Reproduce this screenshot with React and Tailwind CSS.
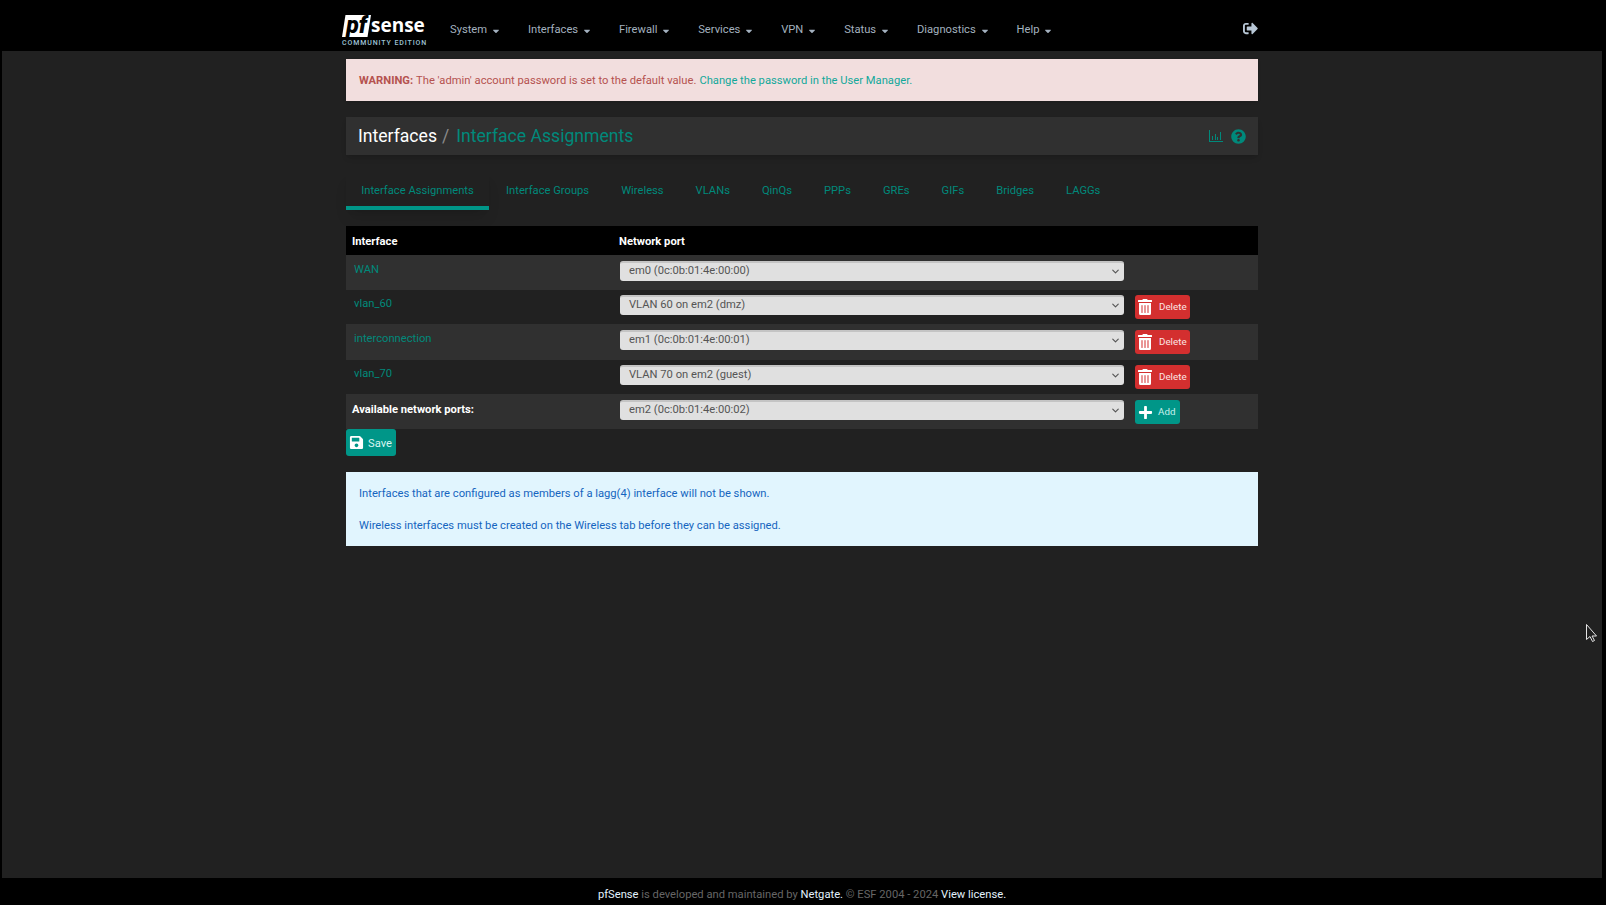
import {FaCaretDown, FaPlus, FaQuestionCircle, FaSave, FaSignOutAlt, FaTrashAlt} from 'react-icons/fa';
import {ChevronDown} from 'lucide-react';

const menus = ['System', 'Interfaces', 'Firewall', 'Services', 'VPN', 'Status', 'Diagnostics', 'Help'];
const tabs = ['Interface Groups', 'Wireless', 'VLANs', 'QinQs', 'PPPs', 'GREs', 'GIFs', 'Bridges', 'LAGGs'];

const rows = [
 {name: 'WAN', port: 'em0 (0c:0b:01:4e:00:00)', h: 'h-[35px] pt-[6px]', bg: 'bg-[#303030]', del: false},
 {name: 'vlan_60', port: 'VLAN 60 on em2 (dmz)', h: 'h-[34px] pt-[5px]', bg: 'bg-[#212121]', del: true},
 {name: 'interconnection', port: 'em1 (0c:0b:01:4e:00:01)', h: 'h-[36px] pt-[6px]', bg: 'bg-[#303030]', del: true},
 {name: 'vlan_70', port: 'VLAN 70 on em2 (guest)', h: 'h-[34px] pt-[5px]', bg: 'bg-[#212121]', del: true},
];

function Logo() {
 return (
  <div className="w-[86px] shrink-0 select-none">
   <div className="flex items-end h-[22px]">
    <span className="bg-white text-black italic font-black text-[23px] leading-[22px] h-[22px] w-[29px] text-center font-['Roboto',sans-serif] [clip-path:polygon(12%_0,100%_0,88%_100%,0_100%)]">
     pf
    </span>
    <span className="text-white font-bold text-[19px] leading-[22px] font-['Open_Sans',sans-serif] mb-[1px]">
     sense
    </span>
   </div>
   <div className="text-[#9fc3d6] text-[7px] leading-[7px] mt-[3px] tracking-[0.9px] font-medium whitespace-nowrap">
    COMMUNITY EDITION
   </div>
  </div>
 );
}

function BarChartIcon() {
 return (
  <svg width="14" height="12" viewBox="0 0 14 12" className="text-[#00897b]" fill="currentColor">
   <rect x="0" y="0" width="1" height="12" />
   <rect x="0" y="11" width="14" height="1" />
   <rect x="3" y="6" width="1" height="4" />
   <rect x="6" y="4" width="1" height="6" />
   <rect x="8" y="7" width="1" height="3" />
   <rect x="11" y="2" width="1" height="8" />
  </svg>
 );
}

function FakeSelect({value}) {
 return (
  <div className="w-[504px] h-[20px] rounded-[3px] bg-[#e0e0e0] border-t-2 border-[#c4c4c4] pl-[9px] pr-[3px] pb-[2px] flex items-center justify-between text-[11.2px] text-[#555]">
   <span>{value}</span>
   <ChevronDown size={11} strokeWidth={2.5} className="text-[#555]" />
  </div>
 );
}

function DeleteButton() {
 return (
  <button className="w-[55px] h-[24px] rounded-[3px] bg-[#d32f2f] text-white flex items-center pl-[2px] text-[9.8px]">
   <FaTrashAlt size={16} />
   <span className="ml-[6px] text-[#fbe4e4]">Delete</span>
  </button>
 );
}

export default function App() {
 return (
  <div className="h-[905px] bg-black flex flex-col font-['Roboto',sans-serif] text-[11.2px] relative overflow-hidden">
   {/* navbar */}
   <div className="h-[51px] shrink-0 flex justify-center pr-[2px]">
    <div className="w-[912px] flex items-start relative">
     <div className="ml-[-4px] mt-[15px]">
      <Logo />
     </div>
     <div className="flex items-center gap-[27px] ml-[22px] mt-[22px] text-[#a3b1bf]">
      {menus.map((m) => (
       <span key={m} className="flex items-center">
        {m}
        <FaCaretDown size={10} className="ml-[3.8px] mt-[1px]" />
       </span>
      ))}
     </div>
     <FaSignOutAlt size={15} className="ml-auto mt-[21px] text-[#b8c7d6]" />
    </div>
   </div>

   {/* page */}
   <div className="flex-1 ml-[2px] mr-[4px] bg-[#212121] flex justify-center">
    <div className="w-[912px]">
     <div className="mt-[8px] h-[42px] bg-[#f2dede] text-[#b5524f] flex items-center pl-[13px] pt-[2px] shadow-sm">
      <b className="font-bold">WARNING:</b>
      <span className="ml-[3px]">The 'admin' account password is set to the default value.</span>
      <a className="ml-[3px] text-[#13a89a]">Change the password in the User Manager.</a>
     </div>

     <div className="mt-[16px] h-[38px] bg-[#303030] flex items-center pl-[12px] pr-[12px] shadow-md">
      <span className="text-white text-[17.6px]">Interfaces</span>
      <span className="text-[#8a8a8a] text-[17.6px] ml-[5px]">/</span>
      <span className="text-[#00897b] text-[17.6px] ml-[7px]">Interface Assignments</span>
      <div className="ml-auto flex items-center gap-[8px]">
       <BarChartIcon />
       <FaQuestionCircle size={15} className="text-[#00897b]" />
      </div>
     </div>

     {/* tabs */}
     <div className="mt-[18px] flex items-start text-[#00897b]">
      <div className="w-[143px] h-[37px] pt-[4px] border-b-[4px] border-[#009688] flex items-center justify-center shadow-lg">
       Interface Assignments
      </div>
      <div className="flex gap-[32px] ml-[17px] h-[33px] pt-[4px] items-center">
       {tabs.map((t) => (
        <span key={t}>{t}</span>
       ))}
      </div>
     </div>

     {/* table */}
     <div className="mt-[16px] h-[29px] bg-black text-white font-bold flex items-center pt-[3px]">
      <span className="w-[266px] pl-[6px]">Interface</span>
      <span className="pl-[7px]">Network port</span>
     </div>
     {rows.map((r) => (
      <div key={r.name} className={`flex items-start ${r.h} ${r.bg}`}>
       <a className="w-[266px] pl-[8px] text-[#00897b] leading-[16px] mt-[1px]">{r.name}</a>
       <div className="pl-[8px]">
        <FakeSelect value={r.port} />
       </div>
       {r.del && (
        <div className="ml-[11px]">
         <DeleteButton />
        </div>
       )}
      </div>
     ))}
     <div className="flex items-start h-[35px] pt-[6px] bg-[#303030]">
      <span className="w-[266px] pl-[6px] text-white font-bold leading-[16px] mt-[2px]">
       Available network ports:
      </span>
      <div className="pl-[8px]">
       <FakeSelect value="em2 (0c:0b:01:4e:00:02)" />
      </div>
      <button className="ml-[11px] w-[45px] h-[24px] rounded-[3px] bg-[#009688] flex items-center pl-[3px] text-[9.8px] text-[#c8f0ec]">
       <FaPlus size={15} className="text-white" />
       <span className="ml-[5px]">Add</span>
      </button>
     </div>

     <button className="w-[50px] h-[27px] rounded-[3px] bg-[#009688] flex items-center pl-[3px] text-[11.2px] text-[#d7f5f1]">
      <FaSave size={15} className="text-white" />
      <span className="ml-[4px] mt-[3px]">Save</span>
     </button>

     <div className="mt-[16px] h-[74px] bg-[#e1f5fe] text-[#1565c0] pl-[13px] pt-[14px] leading-[15px]">
      <p>Interfaces that are configured as members of a lagg(4) interface will not be shown.</p>
      <p className="mt-[17px]">Wireless interfaces must be created on the Wireless tab before they can be assigned.</p>
     </div>
    </div>
   </div>

   {/* footer */}
   <div className="h-[27px] shrink-0 flex items-center justify-center pt-[8px] pr-[2px] text-[#666]">
    <span>
     <a className="text-[#e3f2fd]">pfSense</a> is developed and maintained by{' '}
     <a className="text-[#e3f2fd]">Netgate.</a> © ESF 2004 - 2024{' '}
     <a className="text-[#e3f2fd]">View license.</a>
    </span>
   </div>

   {/* mouse pointer left in the capture */}
   <svg width="12" height="18" viewBox="0 0 12 18" className="absolute left-[1586px] top-[624px]">
    <path d="M.5.5v15l3.5-3 2.5 5 2-1-2.5-4.5h4.5z" fill="#212121" stroke="#e5e5e5" strokeWidth="1" />
   </svg>
  </div>
 );
}
